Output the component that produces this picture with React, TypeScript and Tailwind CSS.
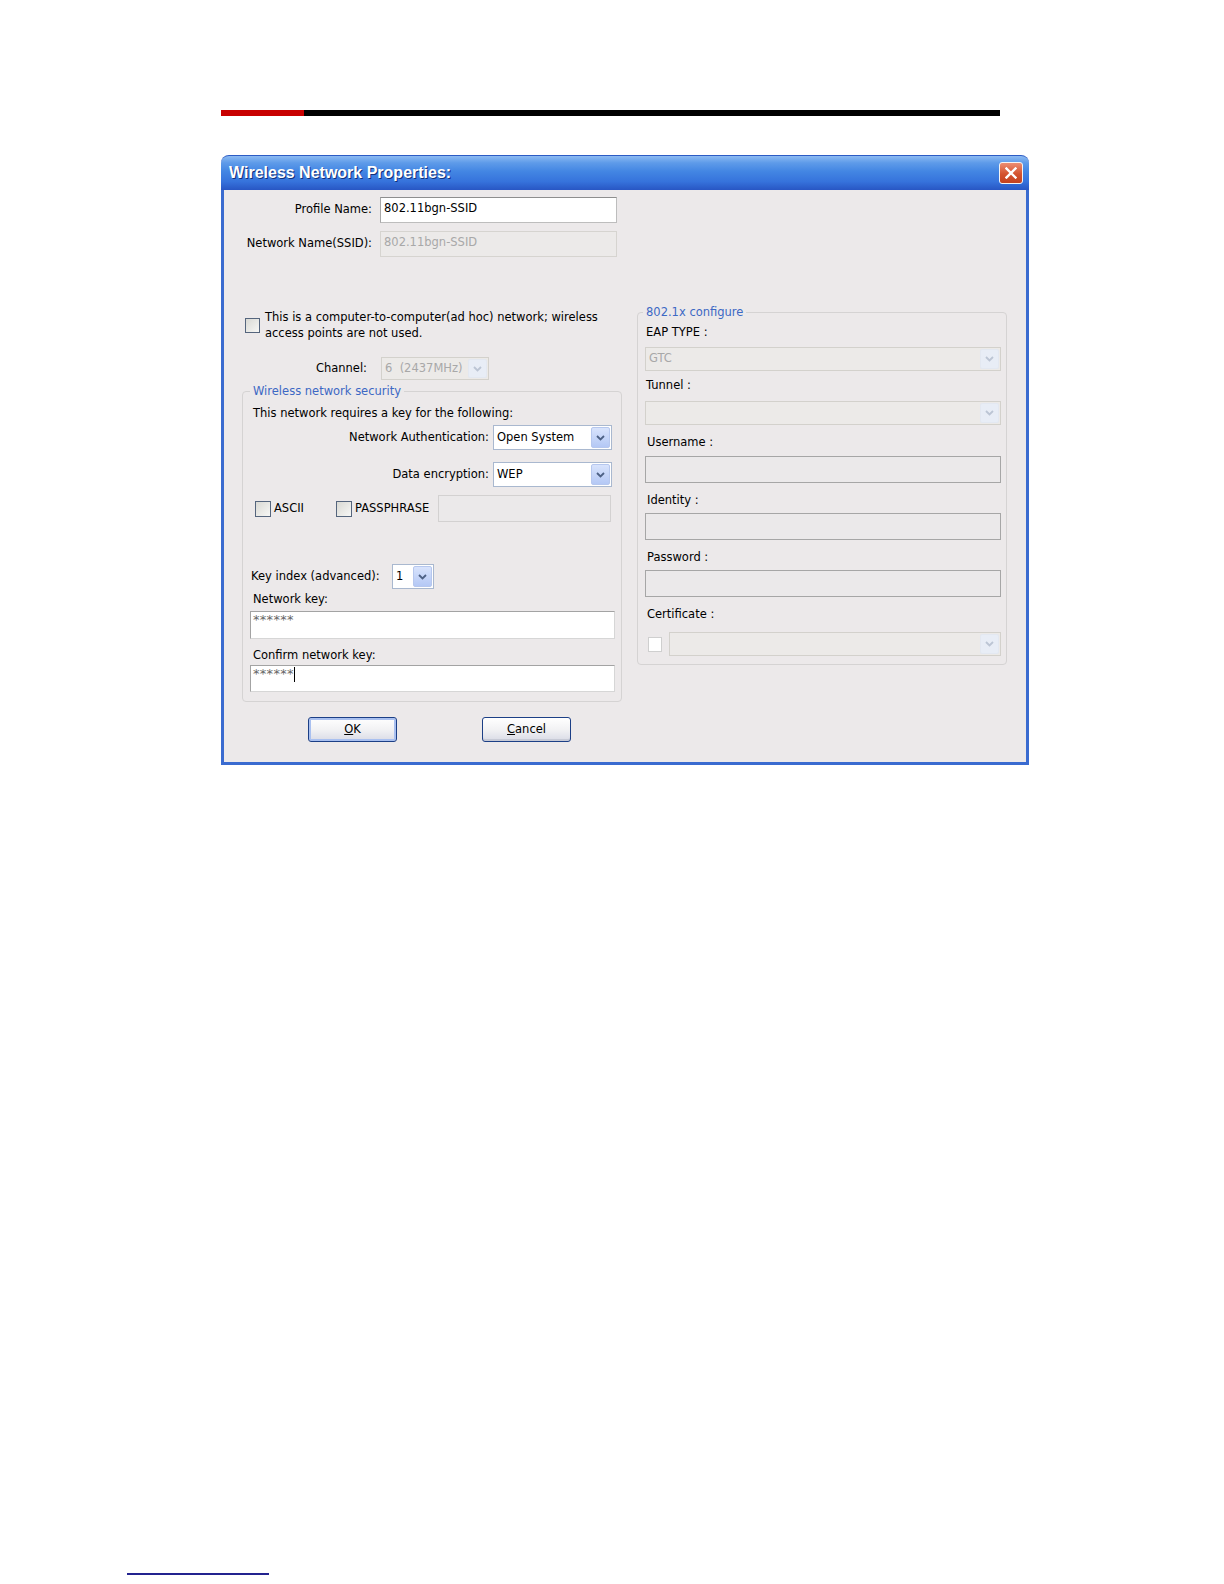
import React from 'react';

// ── Small XP-style controls ────────────────────────────────────────────────

function Chevron({ color }: { color: string }) {
  return (
    <svg width="9" height="6" viewBox="0 0 9 6">
      <path d="M1 1l3.5 3.5L8 1" fill="none" stroke={color} strokeWidth="1.8" />
    </svg>
  );
}

function Select({
  value,
  className,
  disabled = false,
}: {
  value?: string;
  className: string;
  disabled?: boolean;
}) {
  return (
    <div
      className={`flex shrink-0 border ${
        disabled ? 'border-[#d3d1cc] bg-[#eceae8]' : 'border-[#a9b8cf] bg-white'
      } ${className}`}
    >
      <div
        className={`flex-1 flex items-center pl-[3px] overflow-hidden whitespace-pre ${
          disabled ? 'text-[#a8a8a8]' : 'text-black'
        }`}
      >
        {value}
      </div>
      <div
        className={`w-[19px] m-px rounded-[2px] border flex items-center justify-center ${
          disabled
            ? 'border-[#e3e8f1] bg-[#e8edf6]'
            : 'border-[#b6c7ee] bg-[linear-gradient(180deg,#d8e3fc,#b4c8f5)]'
        }`}
      >
        <Chevron color={disabled ? '#bcc5d4' : '#4d6185'} />
      </div>
    </div>
  );
}

function Checkbox({ className }: { className: string }) {
  return (
    <div
      className={`shrink-0 border border-[#55657d] bg-[linear-gradient(135deg,#d9d9d4,#f7f7f5)] ${className}`}
    />
  );
}

function XpButton({ label, accel, focused = false }: { label: string; accel: string; focused?: boolean }) {
  const rest = label.slice(1);
  return (
    <button
      className={`w-[89px] h-[25px] rounded-[3px] border border-[#1c3f86] flex items-center justify-center text-black bg-[linear-gradient(180deg,#ffffff_0%,#f2f2f4_50%,#d9dbe6_100%)] ${
        focused ? 'shadow-[inset_0_0_0_2px_#a9c0f0]' : 'shadow-[inset_0_-2px_0_#c7cad6]'
      }`}
    >
      <span>
        <span className="underline">{accel}</span>
        {rest}
      </span>
    </button>
  );
}

// ── Page ─────────────────────────────────────────────────────────────────────

export default function App() {
  return (
    <div className="min-h-[1584px] bg-white font-['DejaVu_Sans',Verdana,sans-serif] text-[11.5px] text-black">
      {/* Header rule */}
      <div className="pt-[110px] pl-[221px]">
        <div className="flex w-[779px] h-[6px]">
          <div className="w-[83px] bg-[#c80000]" />
          <div className="flex-1 bg-black" />
        </div>
      </div>

      {/* Dialog */}
      <div className="ml-[221px] mt-[39px] w-[808px] h-[610px] flex flex-col">
        {/* Title bar */}
        <div className="h-[35px] rounded-t-[8px] flex justify-between bg-[linear-gradient(180deg,#8cbaf2_0%,#5e9be9_20%,#4386e3_45%,#3673dc_75%,#2856c4_100%)] border-t border-[#2c5bc4]">
          <div className="pl-[8px] pt-[8px] font-['Liberation_Sans',Arial,sans-serif] font-bold text-[16px] leading-[18px] text-white [text-shadow:1px_1px_0_#12307a]">
            Wireless Network Properties:
          </div>
          <div className="mt-[6px] mr-[6px] w-[24px] h-[22px] rounded-[3px] border border-[#f4f4f4] bg-[linear-gradient(180deg,#ec8e72,#d4532f_55%,#c4421f)] flex items-center justify-center">
            <svg width="12" height="12" viewBox="0 0 12 12">
              <path d="M1.5 1.5l9 9M10.5 1.5l-9 9" stroke="white" strokeWidth="2.4" strokeLinecap="square" />
            </svg>
          </div>
        </div>

        {/* Body */}
        <div className="flex-1 border-x-[3px] border-b-[3px] border-[#3a6bd0] bg-[#ece9ea] pt-[7px]">
          {/* Name rows */}
          <div className="flex items-center">
            <div className="w-[148px] text-right">Profile Name:</div>
            <div className="ml-[8px] w-[237px] h-[26px] bg-white border border-[#bdbdbd] border-t-[#8e8e8e] border-l-[#a8a8a8] pl-[3px] pt-[2px]">
              802.11bgn-SSID
            </div>
          </div>
          <div className="flex items-center mt-[8px]">
            <div className="w-[148px] text-right">Network Name(SSID):</div>
            <div className="ml-[8px] w-[237px] h-[26px] bg-[#eceae9] border border-[#d6d4d0] pl-[3px] pt-[2px] text-[#a8a8a8]">
              802.11bgn-SSID
            </div>
          </div>

          <div className="flex items-start">
            {/* Left column */}
            <div className="ml-[18px] w-[380px] mt-[52px]">
              <div className="flex items-center pl-[3px]">
                <Checkbox className="w-[15px] h-[15px]" />
                <div className="ml-[5px] leading-[16px]">
                  This is a computer-to-computer(ad hoc) network; wireless
                  <br />
                  access points are not used.
                </div>
              </div>

              <div className="flex items-center mt-[16px]">
                <div className="w-[125px] text-right">Channel:</div>
                <Select value="6  (2437MHz)" className="ml-[14px] w-[108px] h-[23px]" disabled />
              </div>

              <fieldset className="mt-[3px] w-[380px] h-[319px] border border-[#d5d3d3] rounded-[4px]">
                <legend className="ml-[7px] px-[3px] leading-[16px] text-[#3d68c4]">Wireless network security</legend>
                <div className="mt-[6px] ml-[10px] leading-[16px]">This network requires a key for the following:</div>

                <div className="flex items-center mt-[4px]">
                  <div className="w-[246px] text-right">Network Authentication:</div>
                  <Select value="Open System" className="ml-[4px] w-[119px] h-[25px]" />
                </div>
                <div className="flex items-center mt-[12px]">
                  <div className="w-[246px] text-right">Data encryption:</div>
                  <Select value="WEP" className="ml-[4px] w-[119px] h-[25px]" />
                </div>

                <div className="flex items-center mt-[8px] h-[27px]">
                  <div className="ml-[12px] w-[81px] flex items-center">
                    <Checkbox className="w-[16px] h-[16px]" />
                    <span className="ml-[3px]">ASCII</span>
                  </div>
                  <div className="w-[102px] flex items-center">
                    <Checkbox className="w-[16px] h-[16px]" />
                    <span className="ml-[3px]">PASSPHRASE</span>
                  </div>
                  <div className="w-[173px] h-[27px] bg-[#ebe9ea] border border-[#d3d1d1]" />
                </div>

                <div className="flex items-center mt-[42px]">
                  <div className="ml-[8px] w-[141px]">Key index (advanced):</div>
                  <Select value="1" className="w-[42px] h-[25px]" />
                </div>

                <div className="mt-[2px] ml-[10px] leading-[16px]">Network key:</div>
                <div className="mt-[4px] ml-[7px] w-[365px] h-[28px] bg-white border border-[#d6d6d6] border-t-[#a3a3a3] border-l-[#a3a3a3] pl-[2px] text-[13px] leading-[15px] text-[#666] tracking-[0.3px]">
                  ******
                </div>

                <div className="mt-[8px] ml-[10px] leading-[16px]">Confirm network key:</div>
                <div className="mt-[2px] ml-[7px] w-[365px] h-[27px] bg-white border border-[#d6d6d6] border-t-[#a3a3a3] border-l-[#a3a3a3] pl-[2px] flex items-start">
                  <span className="text-[13px] leading-[15px] text-[#666] tracking-[0.3px]">******</span>
                  <span className="mt-[1px] w-px h-[15px] bg-black" />
                </div>
              </fieldset>

              <div className="flex mt-[15px]">
                <div className="ml-[66px]">
                  <XpButton label="OK" accel="O" focused />
                </div>
                <div className="ml-[85px]">
                  <XpButton label="Cancel" accel="C" />
                </div>
              </div>
            </div>

            {/* Right column */}
            <fieldset className="ml-[15px] mt-[47px] w-[370px] h-[361px] border border-[#d5d3d3] rounded-[4px]">
              <legend className="ml-[5px] px-[3px] leading-[16px] text-[#3d68c4]">802.1x configure</legend>
              <div className="mt-[4px] ml-[8px] leading-[16px]">EAP TYPE :</div>
              <Select value="GTC" className="mt-[7px] ml-[7px] w-[356px] h-[24px]" disabled />
              <div className="mt-[6px] ml-[8px] leading-[16px]">Tunnel :</div>
              <Select className="mt-[8px] ml-[7px] w-[356px] h-[24px]" disabled />
              <div className="mt-[9px] ml-[9px] leading-[16px]">Username :</div>
              <div className="mt-[6px] ml-[7px] w-[356px] h-[27px] bg-[#ebe9ea] border border-[#a6a6a6]" />
              <div className="mt-[9px] ml-[9px] leading-[16px]">Identity :</div>
              <div className="mt-[5px] ml-[7px] w-[356px] h-[27px] bg-[#ebe9ea] border border-[#a6a6a6]" />
              <div className="mt-[9px] ml-[9px] leading-[16px]">Password :</div>
              <div className="mt-[5px] ml-[7px] w-[356px] h-[27px] bg-[#ebe9ea] border border-[#a6a6a6]" />
              <div className="mt-[9px] ml-[9px] leading-[16px]">Certificate :</div>
              <div className="flex items-center mt-[10px]">
                <div className="ml-[10px] w-[14px] h-[15px] bg-white border border-[#cfcfcf]" />
                <Select className="ml-[7px] w-[332px] h-[24px]" disabled />
              </div>
            </fieldset>
          </div>
        </div>
      </div>

      {/* Footer link rule */}
      <div className="ml-[127px] mt-[808px] w-[142px] h-[2px] bg-[#23238f]" />
    </div>
  );
}
